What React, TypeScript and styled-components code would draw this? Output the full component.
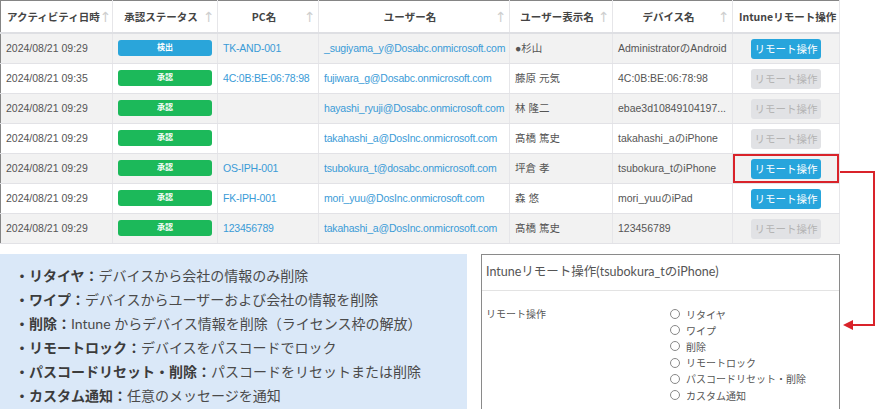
import React from 'react';
import styled, { createGlobalStyle } from 'styled-components';

const GlobalStyle = createGlobalStyle`
  html, body {
    margin: 0;
    padding: 0;
    background: #ffffff;
  }
  body {
    font-family: Lato, "Noto Sans CJK JP", sans-serif;
    color: #555;
  }
`;

type Row = {
    date: string;
    status: '検出' | '承認';
    pc: string;
    user: string;
    display: string;
    device: string;
    remote: boolean;
    highlighted?: boolean;
};

const rows: Row[] = [
    {date: '2024/08/21 09:29', status: '検出', pc: 'TK-AND-001', user: '_sugiyama_y@Dosabc.onmicrosoft.com', display: '●杉山', device: 'AdministratorのAndroid', remote: true},
    {date: '2024/08/21 09:35', status: '承認', pc: '4C:0B:BE:06:78:98', user: 'fujiwara_g@Dosabc.onmicrosoft.com', display: '藤原 元気', device: '4C:0B:BE:06:78:98', remote: false},
    {date: '2024/08/21 09:29', status: '承認', pc: '', user: 'hayashi_ryuji@Dosabc.onmicrosoft.com', display: '林 隆二', device: 'ebae3d10849104197...', remote: false},
    {date: '2024/08/21 09:29', status: '承認', pc: '', user: 'takahashi_a@DosInc.onmicrosoft.com', display: '髙橋 篤史', device: 'takahashi_aのiPhone', remote: false},
    {date: '2024/08/21 09:29', status: '承認', pc: 'OS-IPH-001', user: 'tsubokura_t@dosabc.onmicrosoft.com', display: '坪倉 孝', device: 'tsubokura_tのiPhone', remote: true, highlighted: true},
    {date: '2024/08/21 09:29', status: '承認', pc: 'FK-IPH-001', user: 'mori_yuu@DosInc.onmicrosoft.com', display: '森 悠', device: 'mori_yuuのiPad', remote: true},
    {date: '2024/08/21 09:29', status: '承認', pc: '123456789', user: 'takahashi_a@DosInc.onmicrosoft.com', display: '髙橋 篤史', device: '123456789', remote: false},
];

const columns = [
    {label: 'アクティビティ日時', width: 112, align: 'left', sort: true},
    {label: '承認ステータス', width: 105, align: 'center', sort: true},
    {label: 'PC名', width: 101, align: 'center', sort: true},
    {label: 'ユーザー名', width: 191, align: 'center', sort: true},
    {label: 'ユーザー表示名', width: 103, align: 'center', sort: true},
    {label: 'デバイス名', width: 120, align: 'center', sort: true},
    {label: 'Intuneリモート操作', width: 107, align: 'center', sort: false},
];

const notes = [
    {label: 'リタイヤ', text: 'デバイスから会社の情報のみ削除'},
    {label: 'ワイプ', text: 'デバイスからユーザーおよび会社の情報を削除'},
    {label: '削除', text: 'Intune からデバイス情報を削除（ライセンス枠の解放）'},
    {label: 'リモートロック', text: 'デバイスをパスコードでロック'},
    {label: 'パスコードリセット・削除', text: 'パスコードをリセットまたは削除'},
    {label: 'カスタム通知', text: '任意のメッセージを通知'},
];

const options = ['リタイヤ', 'ワイプ', '削除', 'リモートロック', 'パスコードリセット・削除', 'カスタム通知'];

const App = () => {
    return (
        <Root>
            <GlobalStyle/>
            <Table>
                <colgroup>
                    {columns.map((c) => <col key={c.label} style={{width: c.width}}/>)}
                </colgroup>
                <thead>
                <tr>
                    {columns.map((c) => (
                        <Th key={c.label}>
                            <HeadInner>
                                <HeadLabel $align={c.align}>{c.label}</HeadLabel>
                                {c.sort && <SortArrow>↑</SortArrow>}
                            </HeadInner>
                        </Th>
                    ))}
                </tr>
                </thead>
                <tbody>
                {rows.map((r, i) => (
                    <Tr key={i} $striped={i % 2 === 0}>
                        <Td>{r.date}</Td>
                        <Td><Badge $status={r.status}>{r.status}</Badge></Td>
                        <Td><Link>{r.pc}</Link></Td>
                        <Td><Link>{r.user}</Link></Td>
                        <Td>{r.display}</Td>
                        <Td>{r.device}</Td>
                        <ActionTd $highlighted={!!r.highlighted}>
                            <RemoteButton $enabled={r.remote}>リモート操作</RemoteButton>
                        </ActionTd>
                    </Tr>
                ))}
                </tbody>
            </Table>

            <Bottom>
                <NotePanel>
                    {notes.map((n) => (
                        <NoteLine key={n.label}>
                            <b>・{n.label}：</b>{n.text}
                        </NoteLine>
                    ))}
                </NotePanel>
                <Dialog>
                    <DialogTitle>Intuneリモート操作(tsubokura_tのiPhone)</DialogTitle>
                    <DialogBody>
                        <FieldLabel>リモート操作</FieldLabel>
                        <RadioList>
                            {options.map((o) => (
                                <RadioItem key={o}>
                                    <RadioCircle/>
                                    {o}
                                </RadioItem>
                            ))}
                        </RadioList>
                    </DialogBody>
                </Dialog>
            </Bottom>

            <Connector width="895" height="409" viewBox="0 0 895 409">
                <path d="M840 172 H874 V325 H852" fill="none" stroke="#d9232a" strokeWidth="2"/>
                <polygon points="843,325 853,320 853,330" fill="#d9232a"/>
            </Connector>
        </Root>
    );
};

export default App;

const Root = styled.div`
  position: relative;
  width: 895px;
  height: 409px;
  overflow: hidden;
`;
const Table = styled.table`
  width: 840px;
  table-layout: fixed;
  border-collapse: collapse;
  border: 1px solid #858585;
  font-family: "Liberation Sans", "Noto Sans CJK JP", sans-serif;
  font-size: 10.5px;
`;
const Th = styled.th`
  height: 31px;
  padding: 0 4px 0 6px;
  border-right: 1px solid #e6e6e9;
  border-bottom: 2px solid #dedfe3;
  background: #fff;
  font-family: "Noto Sans CJK JP", sans-serif;
  font-weight: bold;
  color: #444;
  font-size: 10.5px;
  white-space: nowrap;
`;
const HeadInner = styled.div`
  display: flex;
  align-items: center;
`;
const HeadLabel = styled.span<{ $align: string }>`
  flex: 1;
  text-align: ${(p) => p.$align};
`;
const SortArrow = styled.span`
  width: 10px;
  color: #cfcfcf;
  font-size: 14px;
  font-weight: normal;
  font-family: "DejaVu Sans", sans-serif;
  text-align: center;
`;
const Tr = styled.tr<{ $striped: boolean }>`
  background: ${(p) => (p.$striped ? '#f2f2f2' : '#ffffff')};
`;
const Td = styled.td`
  height: 27px;
  padding: 0 5px 2px 5px;
  border-right: 1px solid #e6e6e9;
  border-bottom: 1px solid #e2e2e6;
  white-space: nowrap;
  overflow: hidden;
  color: #555;
`;
const ActionTd = styled(Td)<{ $highlighted: boolean }>`
  padding: 0;
  text-align: center;
  box-shadow: ${(p) => (p.$highlighted ? 'inset 0 0 0 2px #d9232a' : 'none')};
`;
const Badge = styled.div<{ $status: string }>`
  height: 16px;
  line-height: 16px;
  border-radius: 3px;
  background: ${(p) => (p.$status === '検出' ? '#2aa5da' : '#1cb95a')};
  color: #fff;
  font-size: 8px;
  font-weight: bold;
  text-align: center;
`;
const Link = styled.span`
  color: #3a9bd7;
  letter-spacing: -0.2px;
`;
const RemoteButton = styled.div<{ $enabled: boolean }>`
  display: inline-block;
  width: 70px;
  height: 20px;
  line-height: 20px;
  border-radius: 3px;
  background: ${(p) => (p.$enabled ? '#27a5dc' : '#e1e2e5')};
  color: ${(p) => (p.$enabled ? '#ffffff' : '#b3b3b3')};
  font-family: "Noto Sans CJK JP", sans-serif;
  font-size: 10.5px;
  text-align: center;
`;
const Bottom = styled.div`
  display: flex;
  align-items: flex-start;
  margin-top: 10px;
`;
const NotePanel = styled.div`
  width: 452px;
  height: 160px;
  padding: 10px 0 0 15px;
  background: #dae8f8;
  font-size: 14px;
  line-height: 24px;
  color: #4a4a4a;

  b {
    color: #3c3c3c;
  }
`;
const NoteLine = styled.div`
  white-space: nowrap;
`;
const Dialog = styled.div`
  margin-left: 14px;
  width: 357px;
  height: 160px;
  border: 1px solid #8a8a8a;
  color: #555;
`;
const DialogTitle = styled.div`
  height: 35px;
  line-height: 33px;
  padding-left: 4px;
  border-bottom: 1px solid #e3e3e3;
  font-size: 12.5px;
`;
const DialogBody = styled.div`
  display: flex;
  padding: 15px 0 0 4px;
  font-size: 10px;
`;
const FieldLabel = styled.div`
  width: 184px;
  line-height: 16px;
`;
const RadioList = styled.div`
  display: flex;
  flex-direction: column;
`;
const RadioItem = styled.div`
  display: flex;
  align-items: center;
  gap: 6px;
  height: 16.2px;
`;
const RadioCircle = styled.span`
  width: 8px;
  height: 8px;
  border: 1px solid #888;
  border-radius: 50%;
`;
const Connector = styled.svg`
  position: absolute;
  left: 0;
  top: 0;
  pointer-events: none;
`;
